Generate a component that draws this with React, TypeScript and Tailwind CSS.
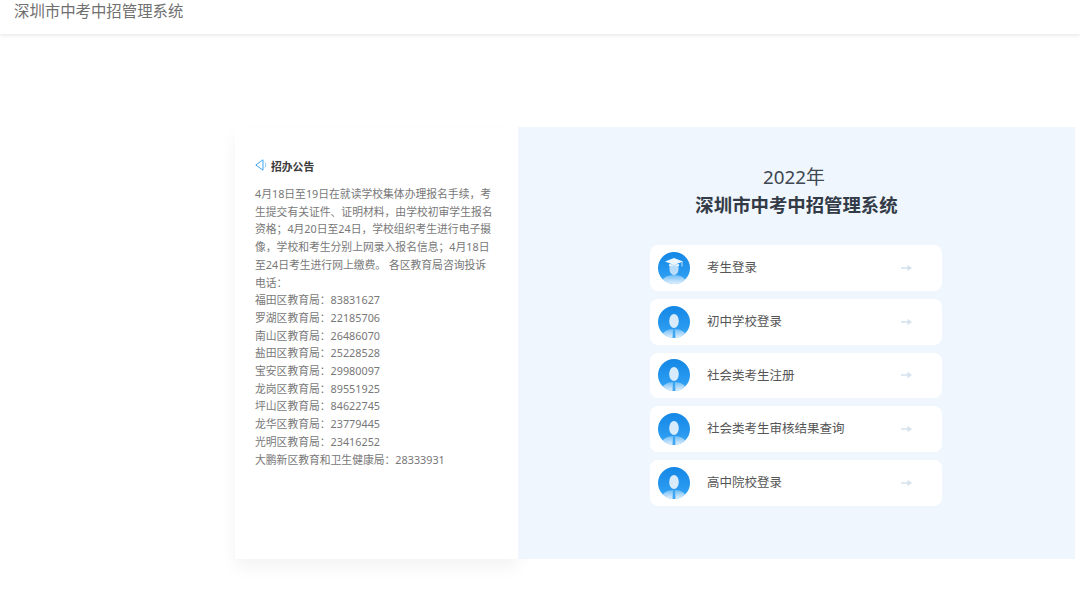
const noticeLines = [
  "4月18日至19日在就读学校集体办理报名手续，考",
  "生提交有关证件、证明材料，由学校初审学生报名",
  "资格；4月20日至24日，学校组织考生进行电子摄",
  "像，学校和考生分别上网录入报名信息；4月18日",
  "至24日考生进行网上缴费。 各区教育局咨询投诉",
  "电话：",
  "福田区教育局：83831627",
  "罗湖区教育局：22185706",
  "南山区教育局：26486070",
  "盐田区教育局：25228528",
  "宝安区教育局：29980097",
  "龙岗区教育局：89551925",
  "坪山区教育局：84622745",
  "龙华区教育局：23779445",
  "光明区教育局：23416252",
  "大鹏新区教育和卫生健康局：28333931",
];

const logins = [
  { label: "考生登录", student: true },
  { label: "初中学校登录", student: false },
  { label: "社会类考生注册", student: false },
  { label: "社会类考生审核结果查询", student: false },
  { label: "高中院校登录", student: false },
];

function Avatar({ id, student }: { id: string; student: boolean }) {
  return (
    <svg viewBox="0 0 32 32" className="h-8 w-8 shrink-0">
      <defs>
        <linearGradient id={id} x1="0" y1="0" x2="0" y2="1">
          <stop offset="0" stopColor="#1487e6" />
          <stop offset="0.7" stopColor="#2a9bf0" />
          <stop offset="1" stopColor="#4aaef4" />
        </linearGradient>
        <linearGradient id={`${id}-body`} x1="0" y1="0" x2="0" y2="1">
          <stop offset="0" stopColor="#6dbcf6" />
          <stop offset="1" stopColor="#e6f2fd" />
        </linearGradient>
        <clipPath id={`${id}-clip`}>
          <circle cx="16" cy="16" r="16" />
        </clipPath>
      </defs>
      <circle cx="16" cy="16" r="16" fill={`url(#${id})`} />
      <g clipPath={`url(#${id}-clip)`}>
        <path d="M3 32c1-6 6-9 13-9s12 3 13 9z" fill={`url(#${id}-body)`} />
        {student ? (
          <>
            <path d="M11.500 12h9v5c0 3.500-2 6-4.500 6s-4.500-2.500-4.500-6z" fill="#b9dcf8" />
            <path d="M16 6l9 3.500-9 3.500-9-3.500z" fill="#eef6fd" />
            <path d="M11 12v2h10v-2l-5 2z" fill="#eef6fd" />
            <path d="M24 9.500v5" stroke="#eef6fd" strokeWidth="0.800" />
          </>
        ) : (
          <>
            <ellipse cx="16" cy="15" rx="4.800" ry="7" fill="#d8ebfb" />
            <path d="M15 23h2l.5 9h-3z" fill="#3fa6f2" />
          </>
        )}
      </g>
    </svg>
  );
}

export default function App() {
  return (
    <div
      className="min-h-[592px] bg-white"
      style={{ fontFamily: '"Noto Sans", "Noto Sans CJK SC", sans-serif' }}
    >
      <header className="flex h-[34px] items-start pl-[14px] shadow-[0_1px_4px_rgba(0,0,0,0.12)]">
        <span className="text-[15.4px] leading-[24px] text-[#707070]">深圳市中考中招管理系统</span>
      </header>

      <main className="mt-[93px] ml-[235px] flex h-[432px] w-[840px]">
        <section className="w-[283px] bg-white pt-[32px] pl-[20px] shadow-[0_8px_16px_rgba(0,0,0,0.05)]">
          <div className="flex h-[16px] items-center gap-[4px]">
            <svg viewBox="0 0 12 12" fill="none" className="h-3 w-3 -translate-y-[2px]">
              <path d="M8 .800v10.400L.800 6z" stroke="#2a9cf0" strokeWidth="0.900" strokeLinejoin="round" />
              <path d="M10 3.500c1 1.600 1 3.400 0 5" stroke="#8ccaf5" strokeWidth="1" />
            </svg>
            <h2 className="text-[10.8px] font-bold text-[#3c3c3c]">招办公告</h2>
          </div>
          <div className="mt-[10px] text-[10.8px] leading-[17.700px] whitespace-nowrap text-[#787878]">
            {noticeLines.map((line) => (
              <p key={line}>{line}</p>
            ))}
          </div>
        </section>

        <section className="flex flex-1 flex-col items-center bg-[#eff6fe] pt-[36px]">
          <p className="pr-[5px] text-[18.800px] leading-[28px] text-[#3f4752]">2022年</p>
          <h1 className="text-[18.400px] leading-[28px] font-bold text-[#333b47]">深圳市中考中招管理系统</h1>
          <div className="mt-[26px] mr-[1px] flex w-[292px] flex-col gap-[8px]">
            {logins.map((item, i) => (
              <div key={item.label} className="flex h-[45.750px] items-center rounded-[8px] bg-white pr-[29px] pl-[8px]">
                <Avatar id={`avatar-${i}`} student={item.student} />
                <span className="ml-[17px] flex-1 pt-[1px] text-[12.500px] text-[#555555]">{item.label}</span>
                <svg viewBox="0 0 12 8" className="h-2 w-3">
                  <path d="M0 3.300h6.500V.800l4.500 3.200-4.500 3.200V4.700H0z" fill="#d5e2ee" />
                </svg>
              </div>
            ))}
          </div>
        </section>
      </main>
    </div>
  );
}
